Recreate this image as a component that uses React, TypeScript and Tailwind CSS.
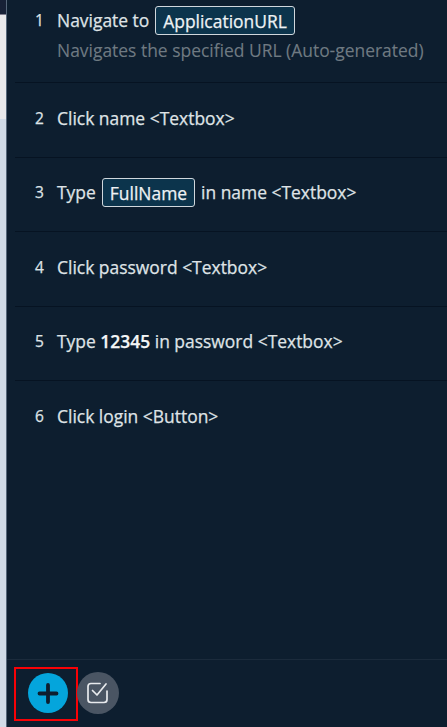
import type { ReactNode } from "react";

function Variable({ children, className }: { children: ReactNode; className: string }) {
  return (
    <span
      className={`flex h-[29px] shrink-0 items-center justify-center rounded-[3px] border border-[#d0d7dc] bg-[#0c344c] pt-0.5 text-[#eef2f4] ${className}`}
    >
      {children}
    </span>
  );
}

function Step({ n, className, children }: { n: number; className: string; children: ReactNode }) {
  return (
    <li className={`ml-2 flex border-[#061322] ${className}`}>
      <span className="w-[42px] shrink-0 pl-5 text-[15.5px] leading-[29px]">{n}</span>
      <div className="whitespace-nowrap">{children}</div>
    </li>
  );
}

export default function App() {
  return (
    <div className="flex h-[727px] w-[447px] overflow-hidden bg-[#0d1e2f] font-['Open_Sans','Noto_Sans',sans-serif] text-[17.45px] leading-[29px] text-[#dfe3e6] [-webkit-text-stroke:0.25px_currentColor]">
      <div className="flex w-[7px] shrink-0 flex-col border-r border-[#56677a]">
        <div className="h-[14px] bg-[#172136]" />
        <div className="h-[105px] border-t border-[#7d7c8c] bg-[#e9e9eb]" />
        <div className="grow bg-[#d1dbe7]" />
      </div>
      <main className="flex grow flex-col">
        <ol className="flex grow flex-col">
          <Step n={1} className="h-[83px] border-b pt-[6px]">
            <div className="flex">
              <span className="w-[98px]">Navigate to</span>
              <Variable className="w-[140px]">ApplicationURL</Variable>
            </div>
            <p className="pt-px text-[#6f7a82] [-webkit-text-stroke:0.1px_currentColor]">Navigates the specified URL (Auto-generated)</p>
          </Step>
          <Step n={2} className="h-[75px] border-b pt-[21px]">Click name &lt;Textbox&gt;</Step>
          <Step n={3} className="h-[74px] border-b pt-[20px]">
            <div className="flex">
              <span className="w-[45px]">Type</span>
              <Variable className="w-[93px]">FullName</Variable>
              <span className="ml-[6px]">in name &lt;Textbox&gt;</span>
            </div>
          </Step>
          <Step n={4} className="h-[75px] border-b pt-[21px]">Click password &lt;Textbox&gt;</Step>
          <Step n={5} className="h-[74px] border-b pt-[20px]">
            Type <b className="font-semibold text-[#f5f6f7]">12345</b> in password &lt;Textbox&gt;
          </Step>
          <Step n={6} className="pt-[21px]">Click login &lt;Button&gt;</Step>
        </ol>
        <footer className="flex h-[68px] border-t border-[#1b2b3c] pt-[7px] pl-[7px]">
          <div className="flex h-[54px] w-[64px] items-start border-2 border-[#f80206] pt-1 pl-3">
            <button className="flex size-10 items-center justify-center rounded-full bg-[#04a5dc]" aria-label="Add step">
              <svg viewBox="0 0 40 40" className="size-10" fill="none" stroke="#0e1e2f" strokeWidth="3.8" strokeLinecap="round">
                <path d="M20 12v17M11.5 20.5h17" />
              </svg>
            </button>
          </div>
          <button className="mt-[5px] -ml-px size-[42px] rounded-full bg-[#4a5563]" aria-label="Add validation">
            <svg viewBox="0 0 42 42" className="size-[42px]" fill="none" stroke="#e8eaed" strokeWidth="1.7" strokeLinecap="round" strokeLinejoin="round">
              <path d="M23 11.500H14q-3 0-3 3v13q0 3 3 3h13q3 0 3-3v-8.500" />
              <path d="m15.500 18.500 4.500 4.500 9-11" />
            </svg>
          </button>
        </footer>
      </main>
    </div>
  );
}
